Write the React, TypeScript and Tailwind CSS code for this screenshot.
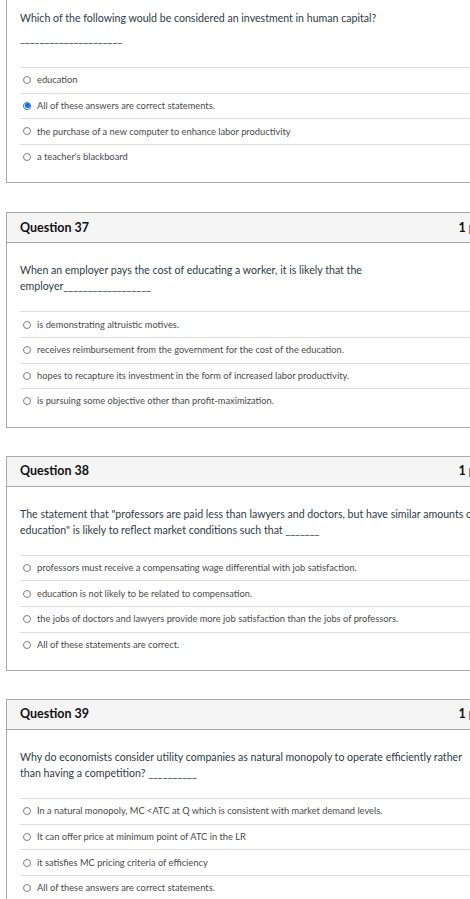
import React from 'react';

interface Question {
  id: number;
  paragraphs: string[];
  answers: string[];
  selected?: number;
}

const questions: Question[] = [
  {
    id: 36,
    paragraphs: [
      'Which of the following would be considered an investment in human capital?',
      '_____________________',
    ],
    answers: [
      'education',
      'All of these answers are correct statements.',
      'the purchase of a new computer to enhance labor productivity',
      "a teacher's blackboard",
    ],
    selected: 1,
  },
  {
    id: 37,
    paragraphs: [
      'When an employer pays the cost of educating a worker, it is likely that the employer__________________',
    ],
    answers: [
      'is demonstrating altruistic motives.',
      'receives reimbursement from the government for the cost of the education.',
      'hopes to recapture its investment in the form of increased labor productivity.',
      'is pursuing some objective other than profit-maximization.',
    ],
  },
  {
    id: 38,
    paragraphs: [
      'The statement that "professors are paid less than lawyers and doctors, but have similar amounts of education" is likely to reflect market conditions such that _______',
    ],
    answers: [
      'professors must receive a compensating wage differential with job satisfaction.',
      'education is not likely to be related to compensation.',
      'the jobs of doctors and lawyers provide more job satisfaction than the jobs of professors.',
      'All of these statements are correct.',
    ],
  },
  {
    id: 39,
    paragraphs: [
      'Why do economists consider utility companies as natural monopoly to operate efficiently rather than having a competition? __________',
    ],
    answers: [
      'In a natural monopoly, MC <ATC at Q which is consistent with market demand levels.',
      'It can offer price at minimum point of ATC in the LR',
      'it satisfies MC pricing criteria of efficiency',
      'All of these answers are correct statements.',
    ],
  },
];

const Radio: React.FC<{ checked?: boolean }> = ({ checked }) =>
  checked ? (
    <span className="flex h-[8px] w-[8px] shrink-0 items-center justify-center rounded-full border border-[#1a6fd6] bg-white">
      <span className="h-[5px] w-[5px] rounded-full bg-[#1a6fd6]" />
    </span>
  ) : (
    <span className="h-[8px] w-[8px] shrink-0 rounded-full border border-[#808080] bg-white" />
  );

const QuestionCard: React.FC<{ q: Question; first?: boolean }> = ({ q, first }) => (
  <div className={`w-[488px] border border-[#a9a9a9] bg-white ${first ? '-mt-[40px] mb-[29px]' : 'mb-[28px]'}`}>
    <div className="flex h-[30px] items-center justify-between border-b border-[#a9a9a9] bg-[#f5f5f5] pl-[13px] pr-[7px]">
      <span className="text-[12.5px] font-bold text-[#111]">Question {q.id}</span>
      <span className="text-[12.5px] font-bold text-[#111]">1 pts</span>
    </div>
    <div className="px-[13px] pt-[19px] pb-[13px]">
      <div className="pb-[17px] text-[10.6px] leading-[16px] text-[#2d3b45]">
        {q.paragraphs.map((p, i) => (
          <p key={i} className={i > 0 ? 'pt-[4px] pb-[4px]' : ''}>
            {p}
          </p>
        ))}
      </div>
      <div>
        {q.answers.map((a, i) => (
          <div key={i} className="flex h-[25.6px] items-center gap-[6px] border-t border-[#dedede] pl-[3px]">
            <Radio checked={q.selected === i} />
            <span className="text-[9.3px] text-[#4a4a4a] whitespace-nowrap">{a}</span>
          </div>
        ))}
      </div>
    </div>
  </div>
);

export default function App() {
  return (
    <div className="h-[899px] w-[470px] overflow-hidden bg-white font-['Lato','Liberation_Sans',sans-serif]">
      <div className="pl-[6px]">
        {questions.map((q, i) => (
          <QuestionCard key={q.id} q={q} first={i === 0} />
        ))}
      </div>
    </div>
  );
}
